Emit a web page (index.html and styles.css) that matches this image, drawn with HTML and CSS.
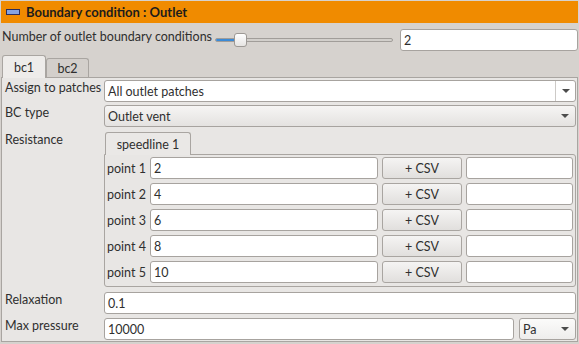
FILE: index.html
```html
<!DOCTYPE html>
<html lang="en">
<head>
  <meta charset="UTF-8">
  <title>Boundary condition : Outlet</title>
  <link rel="stylesheet" href="styles.css">
</head>
<body>

  <div class="header">
    <span class="header-icon"></span>
    <span>Boundary condition : Outlet</span>
  </div>

  <div class="count-row">
    <div class="count-label">Number of outlet boundary conditions</div>
    <div class="slider">
      <div class="groove"><div class="groove-fill"></div></div>
      <div class="handle"></div>
    </div>
    <div class="field spin">2</div>
  </div>

  <div class="tabbar">
    <div class="tab active">bc1</div>
    <div class="tab">bc2</div>
  </div>

  <div class="pane">
    <div class="form">
      <div class="label">Assign to patches</div>
      <div class="combo editable">
        <span class="combo-text">All outlet patches</span>
        <span class="combo-btn"><span class="arrow"></span></span>
      </div>

      <div class="label">BC type</div>
      <div class="combo">
        <span class="combo-text">Outlet vent</span>
        <span class="combo-btn"><span class="arrow"></span></span>
      </div>

      <div class="label resistance-label">Resistance</div>
      <div class="resistance">
        <div class="tabbar inner">
          <div class="tab active">speedline 1</div>
        </div>
        <div class="points">
          <div class="point-label">point 1</div>
          <div class="field">2</div>
          <div class="button">+ CSV</div>
          <div class="field"></div>

          <div class="point-label">point 2</div>
          <div class="field">4</div>
          <div class="button">+ CSV</div>
          <div class="field"></div>

          <div class="point-label">point 3</div>
          <div class="field">6</div>
          <div class="button">+ CSV</div>
          <div class="field"></div>

          <div class="point-label">point 4</div>
          <div class="field">8</div>
          <div class="button">+ CSV</div>
          <div class="field"></div>

          <div class="point-label">point 5</div>
          <div class="field">10</div>
          <div class="button">+ CSV</div>
          <div class="field"></div>
        </div>
      </div>

      <div class="label relax">Relaxation</div>
      <div class="field relax">0.1</div>

      <div class="label">Max pressure</div>
      <div class="pressure-row">
        <div class="field">10000</div>
        <div class="combo unit">
          <span class="combo-text">Pa</span>
          <span class="combo-btn"><span class="arrow"></span></span>
        </div>
      </div>
    </div>
  </div>

</body>
</html>
```

FILE: styles.css
```css
* {
  box-sizing: border-box;
}
body {
  margin: 0;
  padding: 1px;
  background: #d6d2ce;
  color: #2f2f2f;
  font-family: Lato, "Noto Sans", sans-serif;
  font-size: 12.5px;
  line-height: 15px;
}

.header {
  height: 22px;
  background: #f08b00;
  display: flex;
  align-items: center;
  gap: 6px;
  padding-left: 5px;
  font-size: 13px;
  font-weight: bold;
  color: #1c1c1c;
}
.header-icon {
  width: 14px;
  height: 6px;
  background: #86a3e0;
  border: 1px solid #2b2d5c;
}

.count-row {
  display: flex;
  height: 22px;
  margin-top: 6px;
}
.count-label {
  width: 214px;
  padding-left: 1px;
  white-space: nowrap;
}
.slider {
  width: 178px;
  position: relative;
}
.groove {
  position: absolute;
  left: 0;
  right: 0;
  top: 9px;
  height: 4px;
  border: 1px solid #a19d99;
  border-radius: 2px;
  background: #d2cfcb;
}
.groove-fill {
  width: 22px;
  height: 100%;
  background: #3b8ad6;
  border-radius: 2px;
}
.handle {
  position: absolute;
  left: 19px;
  top: 4px;
  width: 13px;
  height: 14px;
  border: 1px solid #9d9995;
  border-radius: 3px;
  background: linear-gradient(#ffffff, #e6e4e2);
}
.spin {
  margin-left: 7px;
  flex: 1;
}

.field {
  height: 22px;
  background: #fff;
  border: 1px solid #a7a39f;
  border-radius: 3px;
  padding: 3px 3px 0;
  white-space: nowrap;
}

.tabbar {
  display: flex;
  align-items: flex-end;
  height: 22px;
  margin-top: 4px;
  padding-left: 1px;
}
.tab {
  height: 19px;
  padding-top: 2px;
  width: 43px;
  text-align: center;
  background: #d3cfcb;
  border: 1px solid #a9a5a1;
  border-bottom: none;
  border-radius: 3px 3px 0 0;
  white-space: nowrap;
}
.tab.active {
  width: 44px;
  height: 23px;
  padding-top: 4px;
  margin-bottom: -1px;
  background: #eeecea;
  position: relative;
  z-index: 1;
}

.pane {
  background: #e8e6e4;
  border: 1px solid #a9a5a1;
  padding: 2px 1px 1px 1px;
}
.form {
  display: grid;
  grid-template-columns: 101px 1fr;
  align-items: start;
}
.label {
  padding-left: 2px;
  padding-top: 0;
  white-space: nowrap;
}

.combo {
  height: 22px;
  display: flex;
  border: 1px solid #a7a39f;
  border-radius: 3px;
  background: linear-gradient(#f6f5f4, #e4e2e0);
}
.combo.editable {
  background: #fff;
  margin-bottom: 3px;
}
.combo-text {
  flex: 1;
  padding: 3px 0 0 3px;
  white-space: nowrap;
}
.combo-btn {
  width: 20px;
  display: flex;
  align-items: center;
  justify-content: center;
}
.combo.editable .combo-btn {
  border-left: 1px solid #cdcac7;
}
.arrow {
  width: 0;
  height: 0;
  border-left: 4px solid transparent;
  border-right: 4px solid transparent;
  border-top: 4px solid #4c4c4c;
}

.resistance,
.resistance-label {
  margin-top: 5px;
}
.tabbar.inner {
  margin-top: 0;
  height: 22px;
  padding-left: 1px;
}
.tabbar.inner .tab.active {
  width: 86px;
  background: #eae8e6;
}
.points {
  border: 1px solid #a9a5a1;
  border-radius: 0 3px 3px 3px;
  padding: 2px 2px 3px 1px;
  display: grid;
  grid-template-columns: 43px 1fr 80px 107px;
  column-gap: 4px;
  row-gap: 4px;
}
.points .point-label {
  padding-top: 4px;
  padding-left: 1px;
  margin-right: -4px;
  white-space: nowrap;
}
.points .field:nth-child(4n+2) {
  margin-left: -3px;
}
.button {
  height: 22px;
  border: 1px solid #a9a5a1;
  border-radius: 3px;
  background: linear-gradient(#f5f4f3, #e1dfdd);
  text-align: center;
  padding-top: 3px;
}

.relax {
  margin-top: 5px;
}
.form > .field.relax {
  margin-bottom: 4px;
}
.pressure-row {
  display: flex;
  gap: 5px;
}
.pressure-row .field {
  flex: 1;
}
.combo.unit {
  width: 57px;
  background: linear-gradient(#fbfbfa, #eeedec);
}
```
